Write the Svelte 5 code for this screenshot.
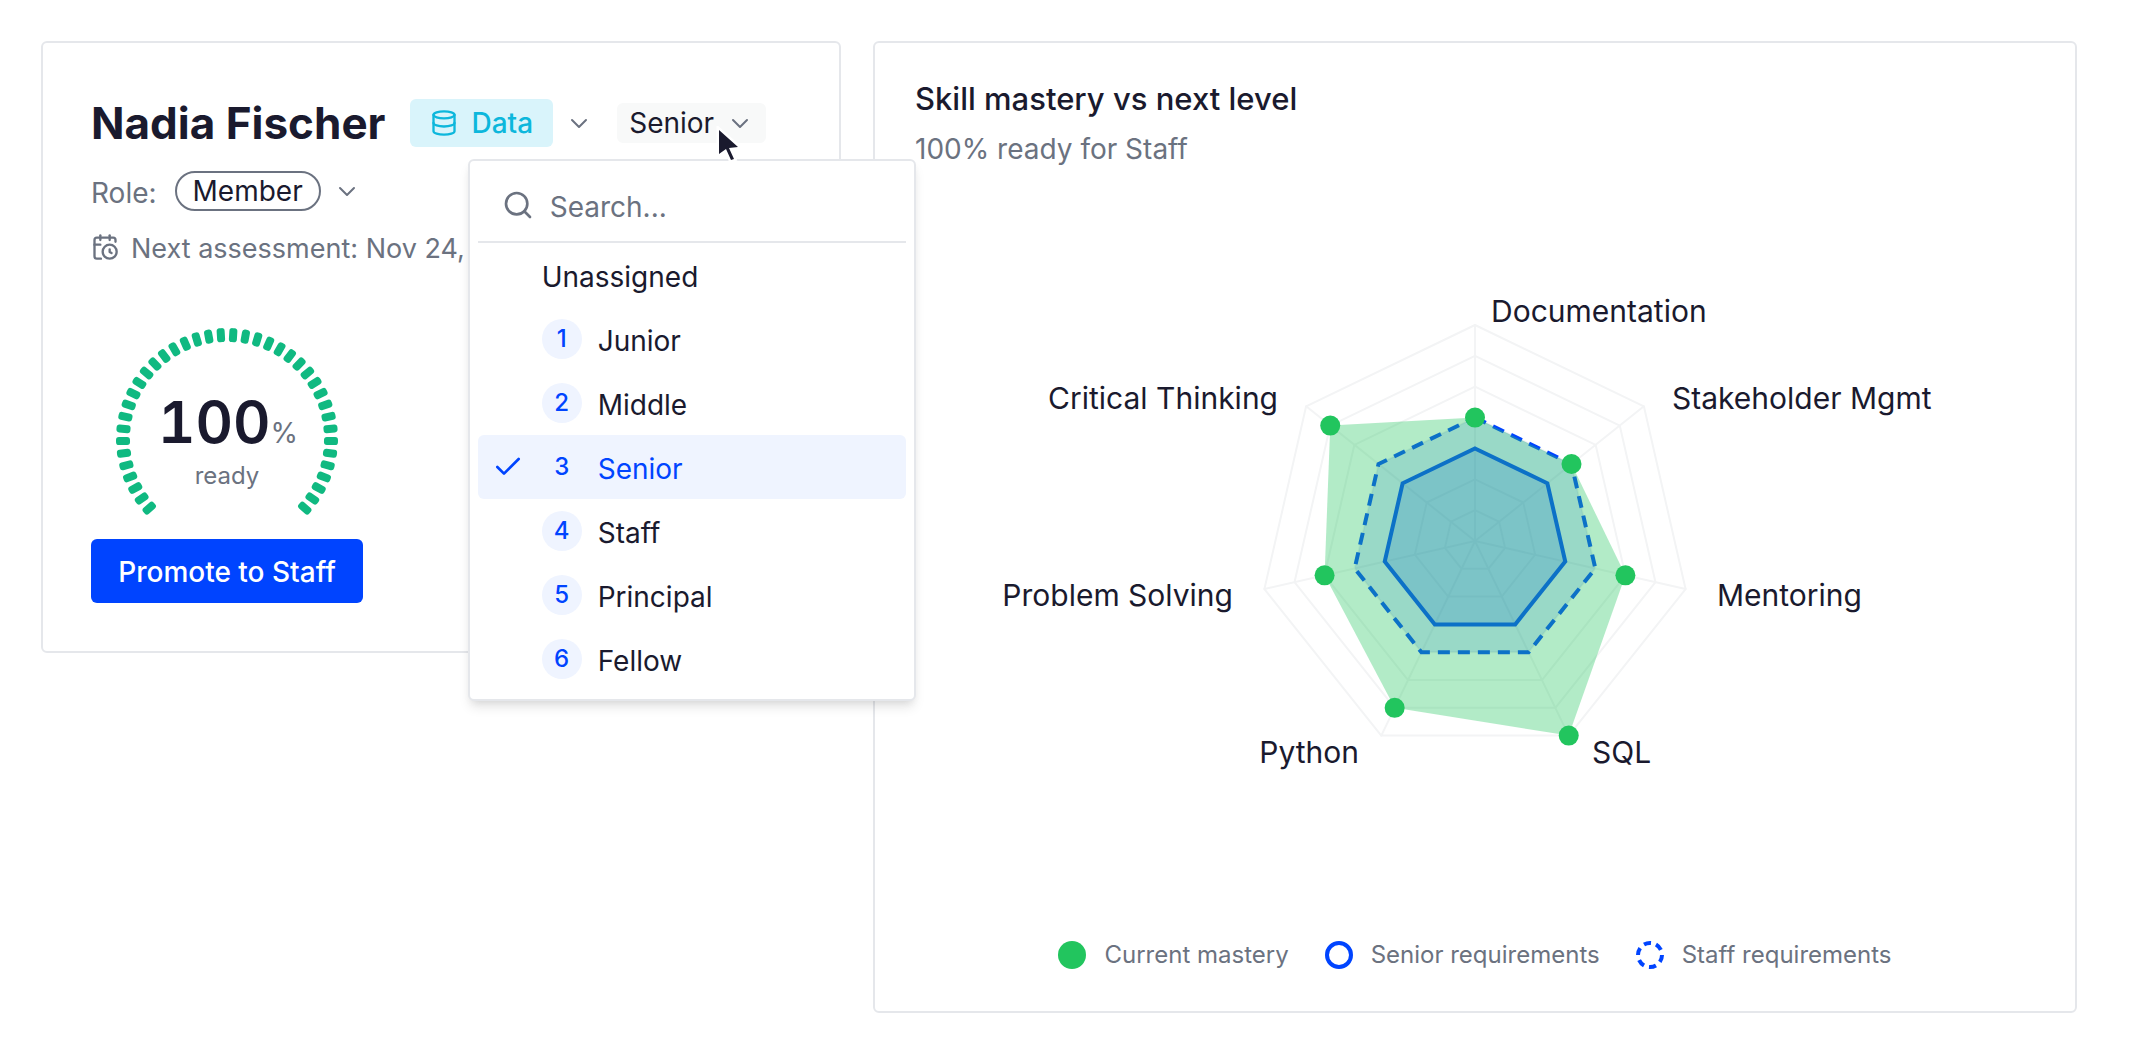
<script>
  const levels = ['Junior', 'Middle', 'Senior', 'Staff', 'Principal', 'Fellow'];
  let selected = $state('Senior');
  let query = $state('');

  const bars = Array.from({ length: 40 }, (_, i) => -135 + 6.75 * (i + 0.5));

  const cx = 560;
  const cy = 350;
  const radius = 216;
  const steps = 7;
  const skills = [
    { name: 'Documentation', value: 4, x: 576, y: 131, anchor: 'start' },
    { name: 'Stakeholder Mgmt', value: 4, x: 757, y: 218, anchor: 'start' },
    { name: 'Mentoring', value: 5, x: 802, y: 415, anchor: 'start' },
    { name: 'SQL', value: 7, x: 677, y: 572, anchor: 'start' },
    { name: 'Python', value: 6, x: 444, y: 572, anchor: 'end' },
    { name: 'Problem Solving', value: 5, x: 318, y: 415, anchor: 'end' },
    { name: 'Critical Thinking', value: 6, x: 363, y: 218, anchor: 'end' }
  ];

  function point(i, value) {
    const a = (i * 2 * Math.PI) / skills.length;
    const r = (radius * value) / steps;
    return [cx + r * Math.sin(a), cy - r * Math.cos(a)];
  }
  const ring = (value) => skills.map((_, i) => point(i, value).join(',')).join(' ');
  const mastery = skills.map((s, i) => point(i, s.value));
</script>

{#snippet chevron()}
  <svg class="chevron" viewBox="0 0 32 32" aria-hidden="true"><path d="m9 13 7 7 7-7" /></svg>
{/snippet}

<main class="page">
  <section class="card profile">
    <header class="heading">
      <h1>Nadia Fischer</h1>
      <div class="selectors">
        <button class="picker" type="button">
          <span class="team">
            <svg class="icon" viewBox="0 0 24 24" aria-hidden="true">
              <ellipse cx="12" cy="5" rx="9" ry="3" />
              <path d="M3 5v14a9 3 0 0 0 18 0V5" />
              <path d="M3 12a9 3 0 0 0 18 0" />
            </svg>
            Data
          </span>
          {@render chevron()}
        </button>
        <div class="level">
          <button class="picker level-button" type="button" aria-haspopup="listbox" aria-expanded="true">
            {selected}
            {@render chevron()}
          </button>
          <svg class="cursor" viewBox="0 0 28 36" aria-hidden="true">
            <path d="M4 4v24l7-5 5 11 3-1-5-11 9-1z" />
          </svg>
          <div class="menu">
            <label class="search">
              <svg class="search-icon" viewBox="0 0 24 24" aria-hidden="true">
                <circle cx="11" cy="11" r="8" />
                <path d="m21 21-4.300-4.300" />
              </svg>
              <input type="text" placeholder="Search..." aria-label="Search levels" bind:value={query} />
            </label>
            <div role="listbox" aria-label="Level">
              <button class="option" type="button" role="option" aria-selected="false">
                <span class="tick"></span>
                <span class="name">Unassigned</span>
              </button>
              {#each levels as level, i}
                <button
                  class="option"
                  class:active={level === selected}
                  type="button"
                  role="option"
                  aria-selected={level === selected}
                  onclick={() => (selected = level)}
                >
                  <span class="tick">
                    {#if level === selected}
                      <svg viewBox="0 0 24 24" aria-hidden="true"><path d="M20 6 9 17l-5-5" /></svg>
                    {/if}
                  </span>
                  <span class="rank">{i + 1}</span>
                  <span class="name">{level}</span>
                </button>
              {/each}
            </div>
          </div>
        </div>
      </div>
    </header>

    <div class="role">
      <span class="name">Role:</span>
      <button class="picker" type="button" aria-label="Role: Member">
        <span class="pill">Member</span>
        {@render chevron()}
      </button>
    </div>

    <p class="next">
      <svg class="icon" viewBox="0 0 24 24" aria-hidden="true">
        <path d="M16 14v2.200l1.600 1" />
        <path d="M16 2v4" />
        <path d="M21 7.500V6a2 2 0 0 0-2-2H5a2 2 0 0 0-2 2v14a2 2 0 0 0 2 2h3.500" />
        <path d="M3 10h5" />
        <path d="M8 2v4" />
        <circle cx="16" cy="16" r="6" />
      </svg>
      <span class="name">Next assessment: Nov 24,</span>
    </p>

    <div class="readiness">
      <svg class="gauge" viewBox="0 0 272 236" role="img" aria-label="100% ready">
        {#each bars as angle}
          <rect x="132" y="25" width="8" height="14" rx="3" transform="rotate({angle} 136 136)" />
        {/each}
        <text class="score" x="137" y="140">100<tspan class="percent">%</tspan></text>
        <text class="caption" x="136" y="181">ready</text>
      </svg>
      <button class="promote" type="button">Promote to Staff</button>
    </div>
  </section>

  <section class="card skills">
    <h2>Skill mastery vs next level</h2>
    <p class="sub">100% ready for Staff</p>

    <svg class="radar" viewBox="0 0 1120 724" role="img" aria-label="Skill mastery radar chart">
      <g class="grid">
        {#each { length: steps } as _, i}
          <polygon points={ring(i + 1)} />
        {/each}
        {#each skills as _, i}
          {@const p = point(i, steps)}
          <line x1={cx} y1={cy} x2={p[0]} y2={p[1]} />
        {/each}
      </g>
      <polygon class="staff" points={ring(4)} />
      <polygon class="senior" points={ring(3)} />
      <polygon class="current" points={mastery.map((p) => p.join(',')).join(' ')} />
      {#each mastery as p}
        <circle class="dot" cx={p[0]} cy={p[1]} r="10" />
      {/each}
      {#each skills as s}
        <text x={s.x} y={s.y} text-anchor={s.anchor}>{s.name}</text>
      {/each}
    </svg>

    <ul class="legend">
      <li>
        <svg viewBox="0 0 28 28" aria-hidden="true"><circle class="dot" cx="14" cy="14" r="14" /></svg>
        Current mastery
      </li>
      <li>
        <svg viewBox="0 0 28 28" aria-hidden="true"><circle class="outline" cx="14" cy="14" r="12" /></svg>
        Senior requirements
      </li>
      <li>
        <svg viewBox="0 0 28 28" aria-hidden="true">
          <circle class="outline dashed" cx="14" cy="14" r="12" pathLength="72" />
        </svg>
        Staff requirements
      </li>
    </ul>
  </section>
</main>

<style>
  :global(body) {
    margin: 0;
    background: #fff;
  }
  .page {
    display: grid;
    grid-template-columns: 200fr 301fr;
    align-items: start;
    gap: 32px;
    padding: 41px 53px 41px 41px;
    color: #1a1a2e;
    font-family: Inter, 'Liberation Sans', sans-serif;
    font-size: 28px;
    line-height: 40px;
  }
  .page * {
    box-sizing: border-box;
  }
  h1,
  h2,
  p,
  ul {
    margin: 0;
    padding: 0;
  }
  button,
  input {
    margin: 0;
    padding: 0;
    border: 0;
    background: none;
    color: inherit;
    font: inherit;
  }
  svg {
    display: block;
    flex: none;
    fill: none;
    stroke-linecap: round;
    stroke-linejoin: round;
  }
  .card {
    border: 2px solid #e5e7eb;
    border-radius: 6px;
    min-width: 0;
  }
  .profile {
    display: flex;
    flex-direction: column;
    gap: 16px;
    padding: 48px;
  }
  .heading {
    display: flex;
    align-items: center;
    gap: 24px;
    white-space: nowrap;
  }
  h1 {
    font-size: 44px;
    line-height: 64px;
    font-weight: 700;
  }
  .selectors {
    display: flex;
    align-items: center;
    gap: 12px;
  }
  .picker {
    display: flex;
    align-items: center;
    gap: 10px;
    padding-right: 10px;
  }
  .chevron {
    width: 32px;
    height: 32px;
    stroke: #6b7280;
    stroke-width: 2;
  }
  .icon {
    width: 28px;
    height: 28px;
    stroke: currentColor;
    stroke-width: 2;
  }
  .team {
    display: flex;
    align-items: center;
    gap: 14px;
    padding: 4px 20px;
    border-radius: 6px;
    background: #d9f4fb;
    color: #0db7dc;
    font-weight: 500;
  }
  .level {
    position: relative;
  }
  .level-button {
    padding-left: 12px;
    border-radius: 6px;
    background: #f8f9f9;
  }
  .cursor {
    position: absolute;
    z-index: 3;
    top: 23px;
    left: 98px;
    width: 28px;
    height: 36px;
    fill: #1a1a2e;
    stroke: #fff;
    stroke-width: 5;
    stroke-linejoin: miter;
    paint-order: stroke;
  }
  .menu {
    position: absolute;
    z-index: 2;
    top: calc(100% + 16px);
    left: 50%;
    width: 448px;
    padding: 8px;
    border: 2px solid #e5e7eb;
    border-radius: 6px;
    background: #fff;
    box-shadow: 0 8px 12px -2px rgb(0 0 0 / 10%), 0 4px 8px -4px rgb(0 0 0 / 10%);
    transform: translateX(-50%);
  }
  .search {
    display: flex;
    align-items: center;
    gap: 16px;
    height: 74px;
    padding: 0 24px;
    border-bottom: 2px solid #e5e7eb;
  }
  .search-icon {
    width: 32px;
    height: 32px;
    stroke: #6b7280;
    stroke-width: 2;
  }
  .search input {
    flex: 1;
    min-width: 0;
    padding-top: 4px;
    outline: none;
  }
  .search input::placeholder {
    color: #6b7280;
    opacity: 1;
  }
  .option {
    display: flex;
    align-items: center;
    width: 100%;
    height: 64px;
    border-radius: 6px;
    text-align: left;
  }
  .option.active {
    background: #eff4ff;
    color: #0044ff;
  }
  .tick {
    display: grid;
    place-items: center;
    width: 60px;
    margin-right: 4px;
  }
  .tick svg {
    width: 32px;
    height: 32px;
    stroke: currentColor;
    stroke-width: 2;
  }
  .rank {
    width: 40px;
    margin-right: 16px;
    border-radius: 50%;
    background: #eff4ff;
    color: #0044ff;
    font-size: 24px;
    font-weight: 500;
    text-align: center;
  }
  .name {
    padding-top: 4px;
    line-height: 36px;
  }
  .role {
    display: flex;
    align-items: center;
    gap: 18px;
    color: #6b7280;
  }
  .pill {
    padding: 0 16px;
    border: 2px solid #6b7280;
    border-radius: 20px;
    color: #1a1a2e;
    line-height: 36px;
  }
  .next {
    display: flex;
    align-items: center;
    gap: 12px;
    height: 40px;
    color: #6b7280;
    font-size: 27px;
    white-space: nowrap;
  }
  .readiness {
    display: flex;
    flex-direction: column;
    align-self: flex-start;
    padding-top: 20px;
  }
  .gauge {
    width: 272px;
    height: 236px;
    fill: #10b981;
  }
  .gauge text {
    text-anchor: middle;
  }
  .score {
    fill: #1a1a2e;
    font-size: 58px;
    font-weight: 600;
    font-variant-numeric: tabular-nums;
  }
  .percent,
  .caption {
    fill: #6b7280;
    font-weight: 400;
  }
  .percent {
    font-size: 28px;
  }
  .caption {
    font-size: 24px;
  }
  .promote {
    height: 64px;
    padding: 2px 24px 0;
    border-radius: 6px;
    background: #0044ff;
    color: #fff;
    font-weight: 500;
    white-space: nowrap;
  }
  .skills {
    padding: 40px;
  }
  h2 {
    font-size: 31px;
    line-height: 32px;
    font-weight: 500;
  }
  .sub {
    margin-top: 14px;
    color: #6b7280;
  }
  .radar {
    width: 100%;
    margin: 22px 0 24px;
  }
  .radar text {
    fill: #1a1a2e;
    font-size: 30px;
  }
  .grid {
    stroke: #f3f4f5;
    stroke-width: 2;
  }
  .staff,
  .senior {
    stroke: #0044ff;
    stroke-width: 4;
    stroke-linecap: butt;
    stroke-linejoin: miter;
    fill: #0044ff;
  }
  .staff {
    fill-opacity: 0.15;
    stroke-dasharray: 12 8;
  }
  .senior {
    fill-opacity: 0.2;
  }
  .current {
    fill: #22c55e;
    fill-opacity: 0.35;
  }
  .dot {
    fill: #22c55e;
  }
  .legend {
    display: flex;
    justify-content: center;
    gap: 36px;
    color: #6b7280;
    font-size: 24px;
    line-height: 32px;
    list-style: none;
  }
  .legend li {
    display: flex;
    align-items: center;
    gap: 18px;
  }
  .legend svg {
    width: 28px;
    height: 28px;
  }
  .outline {
    stroke: #0044ff;
    stroke-width: 4;
    stroke-linecap: butt;
  }
  .dashed {
    stroke-dasharray: 7 5;
  }
</style>
